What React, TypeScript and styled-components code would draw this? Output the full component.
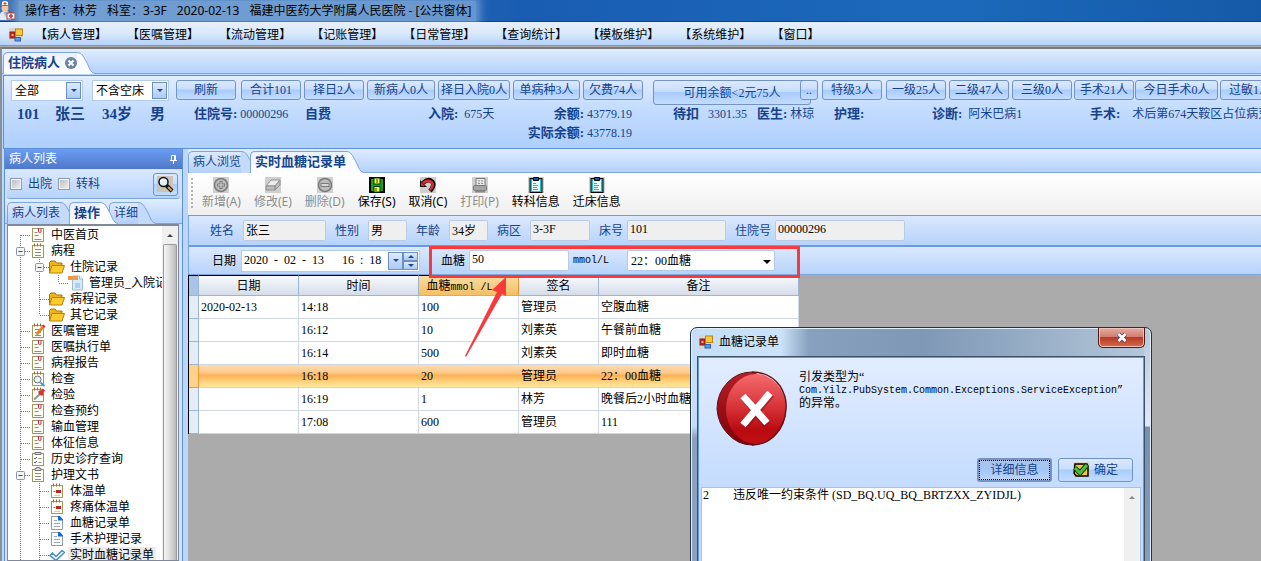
import React from 'react';
import styled, { createGlobalStyle, css } from 'styled-components';

const song = `"Liberation Serif", "Noto Sans CJK SC", serif`;
const hei = `"Noto Sans", "Noto Sans CJK SC", sans-serif`;
const ink = '#15428b';

const GlobalStyle = createGlobalStyle`
  * { box-sizing: border-box; }
  body { margin: 0; background: #ababab; }
  button, input, select, textarea { font: inherit; color: inherit; margin: 0; }
`;

/* ---------- window frame ---------- */
const Window = styled.div`
  height: 100vh;
  display: flex;
  flex-direction: column;
  overflow: hidden;
  font: 12px/16px ${song};
  color: #000;
  white-space: nowrap;
`;
const TitleBar = styled.header`
  flex: none;
  height: 22px;
  display: flex;
  align-items: center;
  background: linear-gradient(90deg, #3f74b8 0, #2b68b4 400px, #195db2 520px, #1c69bb 75%, #155aa8 100%);
  border-bottom: 1px solid #173f77;
  font-family: ${hei};
`;
const TitleText = styled.h1`
  display: flex;
  gap: 10px;
  margin: 0;
  padding: 0 4px 0 6px;
  font-size: 12px;
  line-height: 20px;
  font-weight: 400;
  background: rgba(160, 195, 232, 0.55);
  box-shadow: 0 0 8px 4px rgba(160, 195, 232, 0.55);
`;
const MenuBar = styled.nav`
  flex: none;
  height: 24px;
  display: flex;
  align-items: center;
  padding: 2px 0 0 9px;
  gap: 2px;
  background: linear-gradient(#e6effb 0, #d9e9fc 50%, #b4d2fa 100%);
  border-bottom: 1px solid #6c9bd8;
`;
const MenuItem = styled.button`
  border: 0;
  padding: 0 10px;
  background: none;
  font: 12px/20px ${hei};
`;
const Frame = styled.main`
  flex: 1;
  min-height: 0;
  display: flex;
  flex-direction: column;
  margin-top: 1px;
  border-top: 2px solid #77797c;
  border-left: 2px solid #8b8f96;
  background: #bcd7fc;
`;

/* ---------- tabs ---------- */
const TabStrip = styled.div<{ $pad?: number; $h?: number }>`
  flex: none;
  height: ${(p) => p.$h ?? 25}px;
  display: flex;
  align-items: flex-end;
  padding-left: ${(p) => p.$pad ?? 0}px;
  background: linear-gradient(#e0ecfe, #b4d2fb);
  border-bottom: 1px solid #7ea5dc;
`;
const TabButton = styled.button<{ $on?: boolean }>`
  position: relative;
  z-index: ${(p) => (p.$on ? 2 : 1)};
  display: flex;
  align-items: stretch;
  height: 22px;
  margin: 0 -9px -1px 0;
  padding: 0;
  border: 0;
  background: none;
  color: ${ink};
  font: ${(p) => (p.$on ? '700 13px' : '400 12px')} / 18px ${song};
`;
const TabBody = styled.span<{ $on?: boolean }>`
  display: flex;
  align-items: center;
  gap: 5px;
  padding: 0 0 2px 4px;
  border: 1px solid #7ea5dc;
  border-width: 1px 0 0 1px;
  border-radius: 5px 0 0 0;
  background: ${(p) => (p.$on ? 'linear-gradient(#e9f1fd, #fff)' : 'linear-gradient(#dceafd, #b3d0f8)')};
`;
const Tail = styled.svg`
  display: block;
  width: 18px;
  height: 22px;
`;
function Tab({ on, children }: { on?: boolean; children: React.ReactNode }) {
  return (
    <TabButton $on={on} role="tab" aria-selected={!!on}>
      <TabBody $on={on}>{children}</TabBody>
      <Tail viewBox="0 0 18 22" aria-hidden>
        <path d="M0 .5C5 .5 6 4 9 9C12 14 13 21 18 21.500V22H0Z" fill={on ? '#fafcff' : '#c4daf9'} />
        <path d="M0 .5C5 .5 6 4 9 9C12 14 13 21 18 21.500" fill="none" stroke="#7ea5dc" />
      </Tail>
    </TabButton>
  );
}

/* ---------- patient summary ---------- */
const Summary = styled.section`
  flex: none;
  height: 74px;
  margin: 1px 0 0 1px;
  padding: 4px 0 0 7px;
  overflow: hidden;
  background: linear-gradient(#e2edff 0, #c4dcfe 45%, #aed0fd 100%);
  border: 1px solid #5f8fd6;
  border-right: 0;
  color: ${ink};
`;
const ButtonRow = styled.div`
  display: flex;
  align-items: flex-start;
  height: 24px;
`;
const Combo = styled.div<{ $w: number; $mr: number }>`
  position: relative;
  flex: none;
  width: ${(p) => p.$w}px;
  height: 21px;
  margin-right: ${(p) => p.$mr}px;
  border: 1px solid #b3cbea;
  background: #fff;
  color: #000;
`;
const BareSelect = styled.select`
  appearance: none;
  width: 100%;
  height: 100%;
  padding: 0 18px 0 3px;
  border: 0;
  background: none;
  outline: 0;
`;
const Drop = styled.span`
  position: absolute;
  top: 1px;
  right: 1px;
  width: 15px;
  height: 17px;
  display: flex;
  align-items: center;
  justify-content: center;
  border: 1px solid #6d8fc0;
  background: linear-gradient(#dfebfd, #a9caf7);
  pointer-events: none;
`;
const Caret = styled.i<{ $up?: boolean; $c?: string; $big?: boolean }>`
  width: 0;
  height: 0;
  border: ${(p) => (p.$big ? 4 : 3)}px solid transparent;
  ${(p) => (p.$up ? 'border-top-width: 0; border-bottom-color' : 'border-bottom-width: 0; border-top-color')}: ${(p) => p.$c ?? '#1d4a94'};
`;
const blueButton = css`
  border: 1px solid #7393c4;
  border-radius: 3px;
  background: linear-gradient(#dbe9fe 0, #c8defd 45%, #a9ccfb 50%, #c3dcfe 100%);
  color: ${ink};
`;
const CountButton = styled.button<{ $w: number; $gap?: number; $tall?: boolean; $over?: boolean }>`
  ${blueButton}
  flex: none;
  width: ${(p) => p.$w}px;
  height: ${(p) => (p.$tall ? 25 : 20)}px;
  margin-right: ${(p) => p.$gap ?? 3}px;
  padding: 0;
  overflow: hidden;
  line-height: 16px;
  ${(p) => p.$over && 'z-index: 1;'}
`;
const Facts = styled.dl`
  display: grid;
  grid-template-columns: 38px 47px 48px 44px 111px 123px 99px 146px 84px 77px 98px 158px max-content;
  grid-auto-rows: 19px;
  margin: 0;
  padding: 0 0 0 6px;
`;
const Fact = styled.div<{ $row?: number }>`
  display: flex;
  align-items: center;
  gap: 3px;
  ${(p) => p.$row && `grid-row: ${p.$row}; grid-column: 8;`}
`;
const Term = styled.dt<{ $w?: number; $big?: boolean }>`
  font-weight: 700;
  font-size: ${(p) => (p.$big ? 15 : 13)}px;
  ${(p) => p.$w && `width: ${p.$w}px; text-align: right;`}
`;
const Value = styled.dd`
  margin: 0;
`;

/* ---------- workspace ---------- */
const Workspace = styled.div`
  flex: 1;
  min-height: 0;
  display: flex;
  gap: 5px;
  padding-left: 2px;
`;
const Dock = styled.aside`
  flex: none;
  width: 179px;
  display: flex;
  flex-direction: column;
  border: 1px solid #5f8fd6;
  border-width: 0 1px;
  background: #cfe2fd;
`;
const DockTitle = styled.h2`
  flex: none;
  display: flex;
  align-items: center;
  justify-content: space-between;
  height: 20px;
  margin: 0;
  padding: 0 4px;
  background: linear-gradient(#6a9df3, #4f78c9);
  color: #fff;
  font-size: 12px;
  font-weight: 400;
`;
const FilterRow = styled.div`
  flex: none;
  display: flex;
  align-items: center;
  height: 29px;
  margin: 1px 2px 0;
  padding: 0 2px 0 3px;
  gap: 6px;
  background: linear-gradient(#d9e8fe, #b7d4fc);
  border-bottom: 1px solid #7ea5dc;
  border-radius: 3px;
  color: ${ink};
`;
const CheckLabel = styled.label`
  display: flex;
  align-items: center;
  gap: 6px;
`;
const Tick = styled.input`
  appearance: none;
  width: 12px;
  height: 12px;
  border: 1px solid #8e9aab;
  background: linear-gradient(135deg, #b4bac2, #f2f2f2);
  box-shadow: inset 0 0 0 1px #f4f4f4;
`;
const IconButton = styled.button`
  ${blueButton}
  display: flex;
  align-items: center;
  justify-content: center;
  width: 25px;
  height: 23px;
  margin-left: auto;
  padding: 0;
`;
const TreeBox = styled.div`
  flex: 1;
  min-height: 0;
  display: flex;
  margin: 0 3px 0 2px;
  border: 1px solid #80899a;
  border-top-width: 2px;
  background: #fff;
`;
const Tree = styled.ul`
  flex: 1;
  min-width: 0;
  margin: 0;
  padding: 1px 0 0 3px;
  overflow: hidden;
  list-style: none;
`;
const TreeRow = styled.li`
  display: flex;
  align-items: center;
  height: 16px;
`;
const TreeText = styled.span<{ $on?: boolean }>`
  padding: 0 2px;
  margin-left: 3px;
  background: ${(p) => (p.$on ? '#ebebeb' : 'none')};
`;
const Guide = styled.svg`
  flex: none;
  display: block;
  width: 19px;
  height: 16px;
`;
const Scroll = styled.div`
  flex: none;
  width: 16px;
  display: flex;
  flex-direction: column;
  align-items: center;
  background: #f0f0f0;
`;
const ScrollUp = styled.span`
  display: flex;
  align-items: center;
  height: 18px;
`;
const Thumb = styled.span`
  flex: 1;
  width: 14px;
  border: 1px solid #9a9a9a;
  border-bottom: 0;
  border-radius: 2px 2px 0 0;
  background: linear-gradient(90deg, #f4f4f4, #dcdcdc 50%, #b9babd);
`;

const Panel = styled.section`
  flex: 1;
  min-width: 0;
  display: flex;
  flex-direction: column;
  position: relative;
  background: #ababab;
`;
const ToolBar = styled.div`
  flex: none;
  height: 43px;
  display: flex;
  align-items: center;
  padding-left: 3px;
  gap: 13px;
  background: linear-gradient(#fff, #efefef);
  border-bottom: 1px solid #6d9bdc;
`;
const Grip = styled.span`
  width: 2px;
  height: 32px;
  margin-right: -4px;
  background: repeating-linear-gradient(#b5b5b5 0 2px, transparent 2px 4px);
`;
const Tool = styled.button`
  display: flex;
  flex-direction: column;
  align-items: center;
  padding: 0;
  border: 0;
  background: none;
  font: 12px/18px ${hei};
  &:disabled { color: #8c8c8c; }
`;
const band = css`
  flex: none;
  display: flex;
  align-items: center;
  background: linear-gradient(#dbe8fd, #b6d3fb);
  border-left: 1px solid #7ea5dc;
`;
const PatientBar = styled.form`
  ${band}
  height: 31px;
  padding-left: 21px;
  border-bottom: 2px solid #6b9ae0;
  color: ${ink};
`;
const EntryBar = styled.form`
  ${band}
  height: 28px;
  padding-left: 23px;
  border-bottom: 1px solid #7ea5dc;
`;
const Field = styled.label<{ $gap?: number; $mr?: number }>`
  display: flex;
  align-items: center;
  gap: ${(p) => p.$gap ?? 4}px;
  margin-right: ${(p) => p.$mr ?? 0}px;
`;
const Text = styled.input<{ $w: number; $edit?: boolean }>`
  width: ${(p) => p.$w}px;
  height: 21px;
  padding: 0 2px 2px;
  border: 1px solid #b9cbe4;
  border-radius: 2px;
  outline: 0;
  background: ${(p) => (p.$edit ? '#fff' : '#efefef')};
  color: #000;
`;
const DateBox = styled.div`
  display: flex;
  align-items: center;
  width: 179px;
  height: 22px;
  margin: 0 9px 0 0;
  border: 1px solid #b3cbea;
  background: #fff;
`;
const DateInput = styled.input`
  flex: 1;
  min-width: 0;
  height: 18px;
  padding: 0 2px;
  border: 0;
  outline: 0;
  background: none;
`;
const Spin = styled.button<{ $h: number }>`
  display: flex;
  align-items: center;
  justify-content: center;
  width: 15px;
  height: ${(p) => p.$h}px;
  padding: 0;
  border: 1px solid #6d8fc0;
  background: linear-gradient(#dfebfd, #a9caf7);
`;
const SpinPair = styled.div`
  display: flex;
  flex-direction: column;
  margin-right: 1px;
`;
const Marked = styled.div`
  display: flex;
  align-items: center;
  height: 32px;
  width: 371px;
  padding: 0 0 2px 9px;
  margin: 0 0 -2px 0;
  gap: 3px;
  border: 3px solid #f73a3c;
  position: relative;
  z-index: 2;
`;
const Unit = styled.span`
  margin: 0 15px 0 1px;
  font: 10px/16px "Liberation Mono", monospace;
`;
const PlainCombo = styled(Combo)`
  border-radius: 2px;
`;
const PlainCaret = styled.span`
  position: absolute;
  right: 3px;
  top: 9px;
  display: flex;
  pointer-events: none;
`;
const Arrow = styled.svg`
  position: absolute;
  z-index: 3;
  left: 276px;
  top: 128px;
  width: 44px;
  height: 81px;
  pointer-events: none;
`;

/* ---------- grid ---------- */
const Grid = styled.table`
  flex: none;
  width: 611px;
  table-layout: fixed;
  border-collapse: separate;
  border-spacing: 0;
  border-left: 1px solid #000;
`;
const Head = styled.th<{ $hot?: boolean; $corner?: boolean }>`
  height: 21px;
  padding: 0 ${(p) => (p.$hot ? 18 : 0)}px 0 0;
  font-weight: 400;
  text-align: center;
  border-top: 1px solid #000;
  border-right: 1px solid ${(p) => (p.$hot ? '#f0953c' : '#9cb5d2')};
  border-bottom: 1px solid #9cb5d2;
  background: ${(p) => (p.$hot ? 'linear-gradient(#f9dca0, #f3c065)' : p.$corner ? '#a9c4e8' : 'linear-gradient(#f8fafd, #d5dde9)')};
`;
const Cell = styled.td`
  height: 23px;
  padding: 0 0 0 2px;
  overflow: hidden;
  border-right: 1px solid #d0d8e6;
  border-bottom: 1px solid #d0d8e6;
  background: #fff;
`;
const RowHead = styled.td`
  padding: 0;
  border-right: 1px solid #9cb5d2;
  border-bottom: 1px solid #9cb5d2;
  background: #e4ecf7;
`;
const Row = styled.tr<{ $on: boolean }>`
  ${(p) =>
    p.$on &&
    css`
      ${Cell} {
        border-right-color: transparent;
        background: linear-gradient(#fcdcb0 0, #fdc889 35%, #fdb153 45%, #fecb72 65%, #ffeba4 100%) border-box;
      }
      ${RowHead} {
        background: #ffd28c;
        border-color: #f0953c;
      }
    `}
`;

/* ---------- error dialog ---------- */
const Dialog = styled.div`
  position: absolute;
  z-index: 5;
  left: 502px;
  top: 178px;
  width: 462px;
  height: 300px;
  display: flex;
  flex-direction: column;
  padding: 0 6px;
  border: 1px solid #22303f;
  border-radius: 7px 7px 0 0;
  box-shadow: inset 0 0 0 1px #e3eefa;
  background:
    linear-gradient(#b6c8da 0, #dfeafa 98px, #7690ae 99px, #8ba4c0 100%) right 1px top 0 / 6px 100% no-repeat,
    linear-gradient(#c3def6 0, #c3def6 98px, #8aa2bd 110px, #8ba4c0 100%) left 1px top 0 / 6px 100% no-repeat,
    linear-gradient(90deg, #c3def6 0, #cbe3fa 90px, #87a0bd 118px, #7f98b5 230px, #8da5c0 300px, #b6c8da 100%);
`;
const DialogTitle = styled.div`
  flex: none;
  display: flex;
  align-items: flex-start;
  gap: 6px;
  height: 28px;
  padding-left: 2px;
  font: 12px/28px ${hei};
`;
const DialogName = styled.h2`
  flex: 1;
  margin: 0;
  font-size: 12px;
  font-weight: 400;
`;
const CloseButton = styled.button`
  width: 47px;
  height: 20px;
  padding: 0;
  display: flex;
  align-items: center;
  justify-content: center;
  border: 1px solid #4d1a17;
  border-top: 0;
  border-radius: 0 0 5px 5px;
  background: linear-gradient(#e3aca2 0, #d27e70 45%, #b93a25 50%, #d5694e 100%);
  box-shadow: inset 0 0 0 1px #eec4ba;
`;
const DialogBody = styled.div`
  flex: 1;
  display: flex;
  flex-direction: column;
  padding: 2px;
  border: 1px solid #3c5068;
  box-shadow: inset 0 0 0 1px #6b9ae0;
  background: linear-gradient(#e2edff 0, #c3dbfe 135px);
`;
const Message = styled.div`
  display: flex;
  gap: 12px;
  height: 97px;
  padding: 12px 0 0 16px;
`;
const MessageText = styled.p`
  margin: 0;
  line-height: 12px;
`;
const Mono = styled.span`
  font: 10px/12px "Liberation Mono", monospace;
`;
const DialogButtons = styled.div`
  display: flex;
  justify-content: flex-end;
  gap: 6px;
  padding: 2px 9px 5px 0;
`;
const DialogButton = styled.button<{ $focus?: boolean }>`
  ${blueButton}
  display: flex;
  align-items: center;
  justify-content: center;
  gap: 5px;
  width: 75px;
  height: 24px;
  padding: 0;
  ${(p) =>
    p.$focus &&
    css`
      outline: 1px dotted #000;
      outline-offset: -3px;
      border: 2px solid #7393c4;
      background: linear-gradient(#a9c4ea, #a3c6f6 50%, #bcd6fb);
    `}
`;
const Details = styled.div`
  flex: 1;
  display: flex;
  margin: 0 1px;
  border: 1px solid #a9c1e0;
  background: #fff;
`;
const DetailText = styled.textarea`
  flex: 1;
  padding: 0 1px;
  border: 0;
  outline: 0;
  resize: none;
  font: 12px/14px "Liberation Sans Narrow", ${song};
  background: none;
`;

/* ---------- icons ---------- */
const FormIcon = () => (
  <svg width="14" height="14" viewBox="0 0 14 14" aria-hidden>
    <rect width="14" height="14" fill="#d5d5d3" />
    <rect x="1" y="4" width="5" height="6" fill="#c8281c" stroke="#8a1a12" />
    <rect x="2.500" y="6" width="2" height="2" fill="#f4aaa0" />
    <rect x="6.500" y="1" width="7" height="6.500" fill="#f8c83c" stroke="#b5851a" />
    <rect x="6" y="9.500" width="5.500" height="3.500" fill="#5b98ec" stroke="#2c62b8" />
  </svg>
);
const NurseIcon = () => (
  <svg width="19" height="21" viewBox="0 0 19 21" aria-hidden>
    <path d="M0 20V14Q1 11 5 11Q10 11 11 15V20Z" fill="#dfeaf5" />
    <circle cx="5" cy="8" r="3.500" fill="#f1c9a5" />
    <path d="M1 8Q0 2 5 2Q10 2 9 9L8 6Q5 6 2 6Z" fill="#a4724c" />
    <path d="M2 5L2 2Q5 0 8 2V5Z" fill="#fff" />
    <path d="M5 2v3M3.500 3.500h3" stroke="#d33" />
    <path d="M4 12l1 5 2-5" fill="#8fb6da" />
    <path d="M9 13V12h3v1" fill="none" stroke="#933" />
    <rect x="7" y="13" width="8" height="6" fill="#fff" stroke="#a33" />
    <path d="M11 14v4M9 16h4" stroke="#d22" strokeWidth="1.500" />
  </svg>
);
const TabClose = () => (
  <svg width="12" height="12" viewBox="0 0 12 12" aria-hidden>
    <circle cx="6" cy="6" r="6" fill="#6b81a5" />
    <path d="M3.500 3.500l5 5M8.500 3.500l-5 5" stroke="#fff" strokeWidth="2" />
  </svg>
);
const Pin = () => (
  <svg width="9" height="11" viewBox="0 0 9 11" aria-hidden>
    <path d="M2.500 6V1.500H6.500V6M5.500 1.500V6M1 6.500H8M4.500 7V10" fill="none" stroke="#fff" />
  </svg>
);
const Magnifier = () => (
  <svg width="17" height="17" viewBox="0 0 17 17" aria-hidden>
    <rect width="16" height="16" fill="#c9c5b8" />
    <path d="M9.500 9.500l5.500 5.500" stroke="#000" strokeWidth="4" />
    <path d="M11 11l3.500 3.500" stroke="#e8a33b" strokeWidth="2" />
    <circle cx="6.500" cy="6" r="4.500" fill="#dff0fb" stroke="#111" strokeWidth="1.500" />
    <path d="M4 6q0-2 2.500-2.500" fill="none" stroke="#fff" strokeWidth="1.500" />
  </svg>
);

type IconKind = 'clip' | 'note' | 'folder' | 'page' | 'pencil' | 'lens' | 'drop' | 'check' | 'board' | 'temp' | 'doc' | 'tick';
const TreeSvg = styled.svg`
  flex: none;
  display: block;
  width: 16px;
  height: 16px;
`;
function TreeIcon({ kind }: { kind: IconKind }) {
  const sheet = <rect x="2.500" y="2.500" width="11" height="12" fill="#fffff4" stroke="#9a9a62" />;
  const rings = <path d="M4.500 .5v3M7.500 .5v3M10.500 .5v3" stroke="#b0641e" />;
  const lines = <path d="M5 6.500h6M5 9.500h6M5 12.500h6" stroke="#8c8c8c" />;
  const art: Record<IconKind, React.ReactNode> = {
    clip: (
      <>
        <rect x="2.500" y="1.500" width="11" height="13" fill="#fffff4" stroke="#9a9a62" />
        <path d="M4.500 5.500h3M4.500 8.500h4M4.500 12.500h7" stroke="#8c8c8c" />
        <path d="M8.500 1v4q1.200 1.500 2.500 0V1.500" fill="none" stroke="#cc2a3c" />
      </>
    ),
    note: <>{sheet}{lines}{rings}</>,
    folder: (
      <>
        <path d="M.5 14V3.500L2 2h4l1.500 2H13v3" fill="#f2b414" stroke="#a87408" />
        <path d="M.5 14L3 6.500h12.500L13 14Z" fill="#fdcb2d" stroke="#b98008" />
      </>
    ),
    page: (
      <>
        <path d="M4.500 1h7l3 3v11h-10Z" fill="#d6ebfa" stroke="#9fb9cf" />
        <path d="M11.500 1v3h3" fill="#fff" stroke="#9fb9cf" />
        <rect x="0" y="1" width="10" height="4" fill="#ee9a4d" />
        <path d="M7 8h5v5H7z" fill="#a7d3ee" />
      </>
    ),
    pencil: (
      <>
        {sheet}{lines}{rings}
        <path d="M6.500 11.500L13 4" stroke="#dc8a28" strokeWidth="3" />
        <path d="M13 4l1.500-1.500" stroke="#cf2f2f" strokeWidth="3" />
      </>
    ),
    lens: (
      <>
        {sheet}{rings}
        <circle cx="7.500" cy="8.500" r="3.500" fill="#e6f3fa" stroke="#69737a" />
        <path d="M10.500 11.500l4 3.500" stroke="#3aa0dc" strokeWidth="2" />
      </>
    ),
    drop: (
      <>
        {sheet}{rings}
        <path d="M4 12.500L10 7" stroke="#8a98a0" strokeWidth="2" />
        <path d="M9 4l4 4M9.500 7.500l4.500-5" stroke="#d93434" strokeWidth="3" />
      </>
    ),
    check: (
      <>
        {sheet}
        <path d="M5 3.500V1.500h6v2Z" fill="#ddd" stroke="#777" />
        <path d="M4 7l1 1 2-2M4 11l1 1 2-2" fill="none" stroke="#36a" />
        <path d="M8.500 7.500h3M8.500 11.500h3" stroke="#8c8c8c" />
      </>
    ),
    board: (
      <>
        {sheet}{lines}
        <path d="M5 3.500V1.500h1.500V.5h3v1H11v2Z" fill="#ddd" stroke="#777" />
      </>
    ),
    temp: (
      <>
        {sheet}{rings}
        <path d="M4.500 8.500h2" stroke="#777" />
        <rect x="7" y="7" width="5" height="3" fill="#c52222" />
        <path d="M5 12.500h6" stroke="#ccc" />
      </>
    ),
    doc: (
      <>
        <path d="M2.500 1.500h8l3 3v10h-11Z" fill="#fafcff" stroke="#9099a8" />
        <path d="M9 1V5.500H14V4.500L11 1Z" fill="#1668d8" />
        <path d="M5 5.500h3M5 8.500h6M5 11.500h6" stroke="#9aa7bb" />
      </>
    ),
    tick: <path d="M1 8.500L3.500 6L7 9.500L13 3.500L15.500 5.500L7 13.500Z" fill="#eaf5fc" stroke="#4a8ebc" strokeWidth="1.500" />,
  };
  return <TreeSvg viewBox="0 0 16 16" aria-hidden>{art[kind]}</TreeSvg>;
}

type GuideKind = '|' | '+' | 'L' | 'F' | 'm' | ' ';
function GuideCell({ kind }: { kind: GuideKind }) {
  const dots = { stroke: '#777', strokeDasharray: '1 1' };
  const from = kind === 'F' ? 8 : 0;
  const to = kind === 'L' ? 8 : 16;
  return (
    <Guide viewBox="0 0 19 16" aria-hidden>
      {kind !== ' ' && <path d={`M9.500 ${from}V${to}`} {...dots} />}
      {kind !== '|' && kind !== ' ' && <path d="M10 8.500H19" {...dots} />}
      {kind === 'm' && (
        <>
          <rect x="5.500" y="4.500" width="8" height="8" rx="1" fill="#f4f4f4" stroke="#8a94a4" />
          <path d="M7.500 8.500h4" stroke="#2a4a9a" />
        </>
      )}
    </Guide>
  );
}

const treeRows: [string, IconKind, string][] = [
  ['F', 'clip', '中医首页'],
  ['m', 'note', '病程'],
  ['|m', 'folder', '住院记录'],
  ['||L', 'page', '管理员_入院记录'],
  ['|+', 'folder', '病程记录'],
  ['|L', 'folder', '其它记录'],
  ['+', 'pencil', '医嘱管理'],
  ['+', 'clip', '医嘱执行单'],
  ['+', 'clip', '病程报告'],
  ['+', 'lens', '检查'],
  ['+', 'drop', '检验'],
  ['+', 'clip', '检查预约'],
  ['+', 'clip', '输血管理'],
  ['+', 'clip', '体征信息'],
  ['+', 'check', '历史诊疗查询'],
  ['m', 'board', '护理文书'],
  ['|+', 'temp', '体温单'],
  ['|+', 'temp', '疼痛体温单'],
  ['|+', 'doc', '血糖记录单'],
  ['|+', 'doc', '手术护理记录'],
  ['|+', 'tick', '实时血糖记录单'],
];

const ToolSvg = styled.svg`
  display: block;
  width: 16px;
  height: 16px;
`;
type ToolKind = 'add' | 'edit' | 'del' | 'save' | 'undo' | 'print' | 'list';
function ToolIcon({ kind }: { kind: ToolKind }) {
  const bg = <rect width="16" height="16" fill="#cfcfcf" />;
  const art: Record<ToolKind, React.ReactNode> = {
    add: (
      <>
        {bg}
        <circle cx="8" cy="8" r="6.500" fill="#bdbdbd" stroke="#7a7a7a" strokeWidth="1.500" />
        <path d="M8 4v8M4 8h8" stroke="#7a7a7a" strokeWidth="3" />
        <path d="M8 5v6M5 8h6" stroke="#d8d8d8" />
      </>
    ),
    edit: (
      <>
        {bg}
        <path d="M1 9L6 3H15L10 9Z" fill="#ececec" stroke="#909090" />
        <path d="M1 9H10V13H1ZM10 9L15 3V8L10 13Z" fill="#bdbdbd" stroke="#909090" />
      </>
    ),
    del: (
      <>
        {bg}
        <circle cx="8" cy="8" r="6.500" fill="#bdbdbd" stroke="#7a7a7a" strokeWidth="1.500" />
        <rect x="4" y="6.500" width="8" height="3" fill="#d8d8d8" stroke="#7a7a7a" />
      </>
    ),
    save: (
      <>
        <rect x="1" y="1" width="14" height="14" fill="#16a022" stroke="#000" strokeWidth="2" />
        <rect x="5" y="1" width="6" height="6" fill="#fff04a" stroke="#053c0a" />
        <rect x="5" y="9.500" width="6" height="5.500" fill="#fff04a" stroke="#053c0a" />
        <path d="M8 2v4M7 11v3" stroke="#0a5c12" />
      </>
    ),
    undo: (
      <>
        {bg}
        <path d="M3 6Q8 1 12.500 5Q15 8.500 10 14" fill="none" stroke="#1a0505" strokeWidth="4.500" />
        <path d="M0 3V10H7Z" fill="#1a0505" />
        <path d="M3 6Q8 2 12 5.500Q14 8.500 10 13" fill="none" stroke="#d83038" strokeWidth="2.500" />
        <path d="M1 5V9H5Z" fill="#d83038" />
      </>
    ),
    print: (
      <>
        {bg}
        <path d="M4 9V1.500h9V9" fill="#e9e9e9" stroke="#7a7a7a" />
        <path d="M6 4h5M6 6.500h5" stroke="#8a8a8a" strokeDasharray="2 1" />
        <rect x="1.500" y="8.500" width="13" height="5" rx="1" fill="#a4a4a4" stroke="#777" />
        <path d="M3 14.500h10" stroke="#8a8a8a" strokeWidth="2" />
      </>
    ),
    list: (
      <>
        <rect width="16" height="16" fill="#cfcfcf" />
        <rect x="2" y="1.500" width="12" height="14" fill="#15c5cf" stroke="#000" />
        <rect x="4" y="3" width="8" height="11" fill="#eaffff" />
        <path d="M5.500 2V.5h5V3.500h-5Z" fill="#1b4fa8" stroke="#000" />
        <path d="M5 6.500h3M5 8.500h5M5 10.500h4M5 12.500h5" stroke="#699" />
      </>
    ),
  };
  return <ToolSvg viewBox="0 0 16 16" aria-hidden>{art[kind]}</ToolSvg>;
}

const ErrorIcon = () => (
  <svg width="71" height="75" viewBox="0 0 71 75" aria-hidden>
    <defs>
      <linearGradient id="face" x1="0" y1="0" x2="0" y2="1">
        <stop offset="0" stopColor="#f56a6c" />
        <stop offset=".45" stopColor="#d8363b" />
        <stop offset=".8" stopColor="#b90a10" />
        <stop offset="1" stopColor="#c01016" />
      </linearGradient>
      <linearGradient id="rim" x1="0" y1="0" x2="0" y2="1">
        <stop offset="0" stopColor="#b81f26" />
        <stop offset="1" stopColor="#7c0006" />
      </linearGradient>
    </defs>
    <path d="M36 1Q22 1 12 11Q1 22 1 38Q2 53 12 63Q22 74 36 74Q50 74 60 60Q50 2 36 1Z" fill="url(#rim)" stroke="#5b1216" />
    <ellipse cx="40" cy="38" rx="30" ry="35" fill="url(#face)" />
    <path d="M36 1Q54 1 64 15Q71 26 70 38Q69 54 59 64Q50 74 36 74" fill="none" stroke="#6b1216" strokeWidth="1.500" />
    <path d="M28 26L51 54M55 23L28 55" stroke="#7c1015" strokeWidth="8" opacity=".5" />
    <path d="M27 25L51 52M54 22L27 54" stroke="#fff" strokeWidth="7" />
  </svg>
);
const OkIcon = () => (
  <svg width="16" height="16" viewBox="0 0 16 16" aria-hidden>
    <rect width="16" height="16" fill="#d9d5c4" />
    <path d="M2 2H14L15 4V14H3L1 11Z" fill="#f3c63e" stroke="#000" strokeWidth="1.500" />
    <path d="M2 6L7 11L14 3" fill="none" stroke="#0a3d0a" strokeWidth="5" />
    <path d="M2 6L7 11L14 3" fill="none" stroke="#53bd3b" strokeWidth="3" />
  </svg>
);

/* ---------- data ---------- */
const menus = ['病人管理', '医嘱管理', '流动管理', '记账管理', '日常管理', '查询统计', '模板维护', '系统维护', '窗口'];

const counts: { label: string; w: number; gap?: number; tall?: boolean; over?: boolean }[] = [
  { label: '刷新', w: 60, gap: 5 },
  { label: '合计101', w: 60 },
  { label: '择日2人', w: 60 },
  { label: '新病人0人', w: 68 },
  { label: '择日入院0人', w: 72 },
  { label: '单病种3人', w: 67 },
  { label: '欠费74人', w: 60, gap: 10 },
  { label: '可用余额<2元75人', w: 158, gap: -11, tall: true },
  { label: '..', w: 18, gap: 4, over: true },
  { label: '特级3人', w: 60, gap: 4 },
  { label: '一级25人', w: 60 },
  { label: '二级47人', w: 60 },
  { label: '三级0人', w: 60, gap: 2 },
  { label: '手术21人', w: 60, gap: 1 },
  { label: '今日手术0人', w: 83, gap: 2 },
  { label: '过敏1人', w: 60 },
];

const tools: { kind: ToolKind; label: string; off?: boolean }[] = [
  { kind: 'add', label: '新增(A)', off: true },
  { kind: 'edit', label: '修改(E)', off: true },
  { kind: 'del', label: '删除(D)', off: true },
  { kind: 'save', label: '保存(S)' },
  { kind: 'undo', label: '取消(C)' },
  { kind: 'print', label: '打印(P)', off: true },
  { kind: 'list', label: '转科信息' },
  { kind: 'list', label: '迁床信息' },
];

const patient: { label: string; value: string; w: number; gap: number }[] = [
  { label: '姓名', value: '张三', w: 83, gap: 9 },
  { label: '性别', value: '男', w: 39, gap: 9 },
  { label: '年龄', value: '34岁', w: 39, gap: 9 },
  { label: '病区', value: '3-3F', w: 60, gap: 9 },
  { label: '床号', value: '101', w: 99, gap: 4 },
  { label: '住院号', value: '00000296', w: 130, gap: 4 },
];

const records = [
  ['2020-02-13', '14:18', '100', '管理员', '空腹血糖'],
  ['', '16:12', '10', '刘素英', '午餐前血糖'],
  ['', '16:14', '500', '刘素英', '即时血糖'],
  ['', '16:18', '20', '管理员', '22：00血糖'],
  ['', '16:19', '1', '林芳', '晚餐后2小时血糖'],
  ['', '17:08', '600', '管理员', '111'],
];

export default function App() {
  return (
    <Window>
      <GlobalStyle />
      <TitleBar>
        <NurseIcon />
        <TitleText>
          <span>操作者：林芳</span>
          <span>科室：3-3F</span>
          <span>2020-02-13</span>
          <span>福建中医药大学附属人民医院 - [公共窗体]</span>
        </TitleText>
      </TitleBar>
      <MenuBar>
        <FormIcon />
        <div>
          {menus.map((m) => (
            <MenuItem key={m}>【{m}】</MenuItem>
          ))}
        </div>
      </MenuBar>
      <Frame>
        <TabStrip $pad={1} role="tablist">
          <Tab on>
            住院病人
            <TabClose />
          </Tab>
        </TabStrip>
        <Summary>
          <ButtonRow>
            <Combo $w={72} $mr={9}>
              <BareSelect aria-label="病人范围">
                <option>全部</option>
              </BareSelect>
              <Drop><Caret /></Drop>
            </Combo>
            <Combo $w={77} $mr={7}>
              <BareSelect aria-label="空床">
                <option>不含空床</option>
              </BareSelect>
              <Drop><Caret /></Drop>
            </Combo>
            {counts.map((c) => (
              <CountButton key={c.label} $w={c.w} $gap={c.gap} $tall={c.tall} $over={c.over}>
                {c.label}
              </CountButton>
            ))}
          </ButtonRow>
          <Facts>
            <Fact><Term $big>101</Term></Fact>
            <Fact><Term $big>张三</Term></Fact>
            <Fact><Term $big>34岁</Term></Fact>
            <Fact><Term $big>男</Term></Fact>
            <Fact><Term>住院号:</Term><Value>00000296</Value></Fact>
            <Fact><Term>自费</Term></Fact>
            <Fact><Term>入院:</Term><Value>&nbsp;675天</Value></Fact>
            <Fact $row={1}><Term $w={57}>余额:</Term><Value>43779.19</Value></Fact>
            <Fact><Term>待扣</Term><Value>&nbsp;&nbsp;3301.35</Value></Fact>
            <Fact><Term>医生:</Term><Value>林琼</Value></Fact>
            <Fact><Term>护理:</Term></Fact>
            <Fact><Term>诊断:</Term><Value>&nbsp;阿米巴病1</Value></Fact>
            <Fact><Term>手术:</Term><Value>&nbsp;&nbsp;&nbsp;术后第674天鞍区占位病变</Value></Fact>
            <Fact $row={2}><Term $w={57}>实际余额:</Term><Value>43778.19</Value></Fact>
          </Facts>
        </Summary>
        <Workspace>
          <Dock>
            <DockTitle>
              病人列表
              <Pin />
            </DockTitle>
            <FilterRow>
              <CheckLabel><Tick type="checkbox" />出院</CheckLabel>
              <CheckLabel><Tick type="checkbox" />转科</CheckLabel>
              <IconButton aria-label="查找"><Magnifier /></IconButton>
            </FilterRow>
            <TabStrip $pad={2} role="tablist">
              <Tab>病人列表</Tab>
              <Tab on>操作</Tab>
              <Tab>详细</Tab>
            </TabStrip>
            <TreeBox>
              <Tree>
                {treeRows.map(([guides, icon, label]) => (
                  <TreeRow key={label}>
                    {guides.split('').map((g, i) => (
                      <GuideCell key={i} kind={g as GuideKind} />
                    ))}
                    <TreeIcon kind={icon} />
                    <TreeText $on={icon === 'tick'}>{label}</TreeText>
                  </TreeRow>
                ))}
              </Tree>
              <Scroll>
                <ScrollUp><Caret $up $c="#444" /></ScrollUp>
                <Thumb />
              </Scroll>
            </TreeBox>
          </Dock>
          <Panel>
            <TabStrip $h={24} role="tablist">
              <Tab>病人浏览</Tab>
              <Tab on>实时血糖记录单</Tab>
            </TabStrip>
            <ToolBar>
              <Grip />
              {tools.map((t) => (
                <Tool key={t.label} disabled={t.off}>
                  <ToolIcon kind={t.kind} />
                  {t.label}
                </Tool>
              ))}
            </ToolBar>
            <PatientBar>
              {patient.map((f) => (
                <Field key={f.label} $gap={f.gap} $mr={9}>
                  {f.label}
                  <Text $w={f.w} readOnly value={f.value} />
                </Field>
              ))}
            </PatientBar>
            <EntryBar>
              <Field $gap={5}>
                日期
                <DateBox>
                  <DateInput defaultValue={'2020\u00a0\u00a0-\u00a0\u00a002\u00a0\u00a0-\u00a0\u00a013\u00a0\u00a0\u00a0\u00a0\u00a0\u00a016\u00a0\u00a0:\u00a0\u00a018'} />
                  <Spin type="button" $h={18} aria-label="选择日期"><Caret /></Spin>
                  <SpinPair>
                    <Spin type="button" $h={9} aria-label="增加"><Caret $up /></Spin>
                    <Spin type="button" $h={9} aria-label="减少"><Caret /></Spin>
                  </SpinPair>
                </DateBox>
              </Field>
              <Marked>
                <Field>
                  血糖
                  <Text $w={100} $edit defaultValue="50" />
                </Field>
                <Unit>mmol/L</Unit>
                <PlainCombo $w={148} $mr={0}>
                  <BareSelect aria-label="测量时段">
                    <option>22：00血糖</option>
                  </BareSelect>
                  <PlainCaret><Caret $big $c="#000" /></PlainCaret>
                </PlainCombo>
              </Marked>
            </EntryBar>
            <Grid>
              <colgroup>
                <col width="10" />
                <col width="100" />
                <col width="120" />
                <col width="100" />
                <col width="80" />
                <col width="200" />
              </colgroup>
              <thead>
                <tr>
                  <Head $corner aria-label="选择" />
                  <Head>日期</Head>
                  <Head>时间</Head>
                  <Head $hot>血糖<Mono>mmol /L</Mono></Head>
                  <Head>签名</Head>
                  <Head>备注</Head>
                </tr>
              </thead>
              <tbody>
                {records.map((r, i) => (
                  <Row key={r[1]} $on={i === 3}>
                    <RowHead />
                    {r.map((v, j) => (
                      <Cell key={j}>{v}</Cell>
                    ))}
                  </Row>
                ))}
              </tbody>
            </Grid>
            <Arrow viewBox="0 0 44 81" aria-hidden>
              <path d="M42 0L28 13L33 15L1 79L2 80L38 17L42 19Z" fill="#f73a3c" />
            </Arrow>
            <Dialog role="dialog" aria-label="血糖记录单">
              <DialogTitle>
                <svg width="14" height="22" viewBox="0 -7 14 22" aria-hidden><FormIcon /></svg>
                <DialogName>血糖记录单</DialogName>
                <CloseButton aria-label="关闭">
                  <svg width="12" height="11" viewBox="0 0 12 11" aria-hidden>
                    <path d="M2.500 2l7 7M9.500 2l-7 7" stroke="#43506a" strokeWidth="4" />
                    <path d="M2.500 2l7 7M9.500 2l-7 7" stroke="#fff" strokeWidth="2.500" />
                  </svg>
                </CloseButton>
              </DialogTitle>
              <DialogBody>
                <Message>
                  <ErrorIcon />
                  <MessageText>
                    引发类型为“
                    <br />
                    <Mono>Com.Yilz.PubSystem.Common.Exceptions.ServiceException”</Mono>
                    <br />
                    的异常。
                  </MessageText>
                </Message>
                <DialogButtons>
                  <DialogButton $focus>详细信息</DialogButton>
                  <DialogButton><OkIcon />确定</DialogButton>
                </DialogButtons>
                <Details>
                  <DetailText
                    aria-label="错误详情"
                    readOnly
                    value={'2\u00a0\u00a0\u00a0\u00a0\u00a0\u00a0\u00a0\u00a0违反唯一约束条件 (SD_BQ.UQ_BQ_BRTZXX_ZYIDJL)'}
                  />
                  <Scroll><ScrollUp><Caret $up $c="#888" /></ScrollUp></Scroll>
                </Details>
              </DialogBody>
            </Dialog>
          </Panel>
        </Workspace>
      </Frame>
    </Window>
  );
}
